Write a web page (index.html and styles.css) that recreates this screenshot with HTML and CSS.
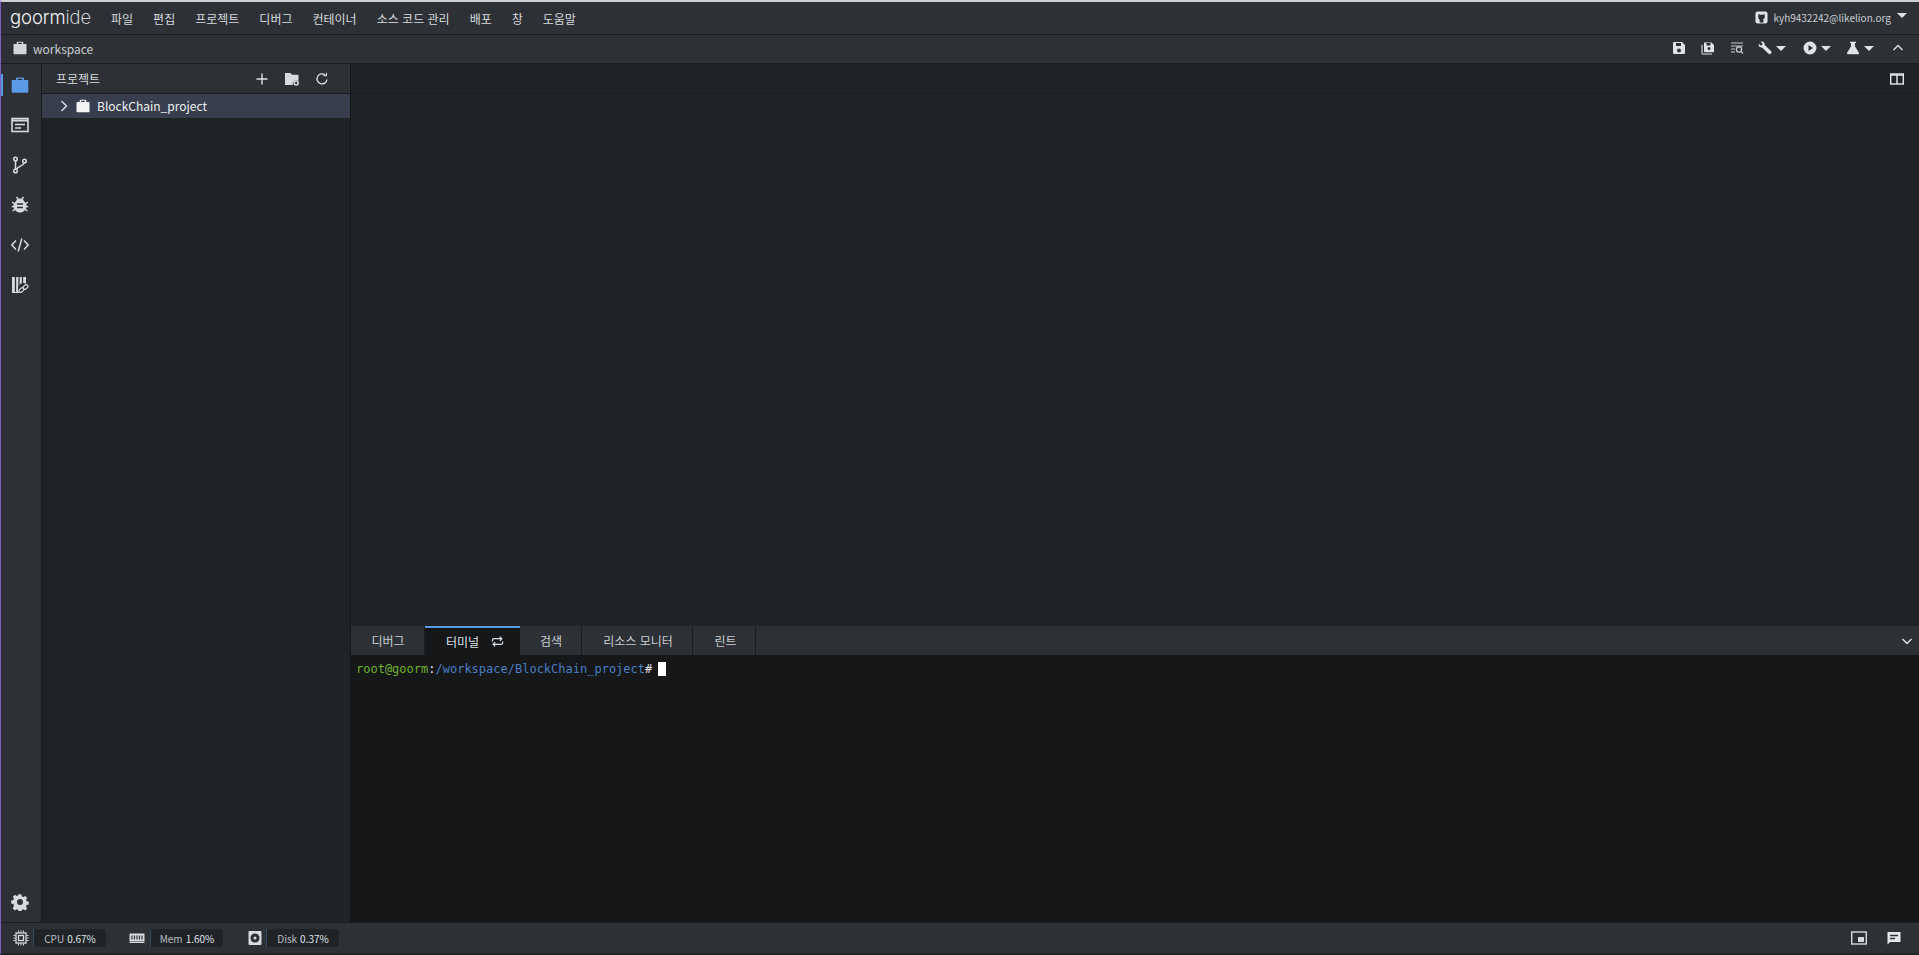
FILE: index.html
```html
<!DOCTYPE html>
<html lang="ko">
<head>
<meta charset="utf-8">
<title>goormIDE</title>
<link rel="stylesheet" href="styles.css">
</head>
<body>
<div class="app">
  <header class="menubar">
    <span class="logo">goorm<i>ide</i></span>
    <nav class="menu">
      <span>파일</span><span>편집</span><span>프로젝트</span><span>디버그</span><span>컨테이너</span><span>소스 코드 관리</span><span>배포</span><span>창</span><span>도움말</span>
    </nav>
    <div class="user">
      <svg class="ic13" viewBox="0 0 14 14"><rect x=".5" y=".5" width="13" height="13" rx="2.500" fill="#dfe3e8"/><path d="M3.500 5.500 3.800 3.200l1.900.9h2.600l1.900-.9.300 2.300c.5 2-.5 3.200-1.900 3.400.4.400.5.800.5 1.300V12.500H5V10c-.1-1-1.800-1-1.500-4.500Z" fill="#2d3135"/></svg>
      <span class="user-mail">kyh9432242@likelion.org</span>
      <span class="caret user-caret"></span>
    </div>
  </header>

  <div class="toolbar">
    <svg class="ic14" viewBox="0 0 14 14"><path d="M4.500 .8h5a.8.800 0 0 1 .8.800V3h2.400a.8.800 0 0 1 .8.800v8.600a.8.800 0 0 1-.8.800H1.300a.8.800 0 0 1-.8-.8V3.800A.8.800 0 0 1 1.300 3h2.400V1.600a.8.800 0 0 1 .8-.8Zm.7 1V3h3.600V1.800Z" fill="#d3d6da" fill-rule="evenodd"/></svg>
    <span class="ws-name">workspace</span>
    <div class="tools">
      <svg class="ic14" viewBox="0 0 14 14"><path d="M1 2a1 1 0 0 1 1-1h8l3 3v8a1 1 0 0 1-1 1H2a1 1 0 0 1-1-1Zm3 0v3h5V2Zm3 5.500a2 2 0 1 0 0 4 2 2 0 0 0 0-4Z" fill="#dfe3e8" fill-rule="evenodd"/></svg>
      <svg class="ic14" viewBox="0 0 14 14"><path d="M3 1.500h7.500L13 4v6.500a.8.800 0 0 1-.8.800H3.800a.8.800 0 0 1-.8-.8Zm2.500.500v2.500h4V2Zm2.500 4a1.500 1.500 0 1 0 0 3 1.500 1.500 0 0 0 0-3Z" fill="#dfe3e8" fill-rule="evenodd"/><path d="M1 4v8.200a.8.800 0 0 0 .8.800H11" fill="none" stroke="#dfe3e8" stroke-width="1.100"/></svg>
      <svg class="ic14" viewBox="0 0 14 14" fill="none" stroke="#c9cdd2"><path d="M1 2h12M1 5h12M1 8h4M1 11h4"/><circle cx="9" cy="8.500" r="2.600" stroke-width="1.300"/><path d="m11 10.500 2 2" stroke-width="1.300"/></svg>
      <span class="tool-drop tool-wrench">
        <svg class="ic14" viewBox="0 0 14 14"><path d="M.8 2.800 3 4.800 4.700 3 2.700.8C5 0 7 1.500 6.700 4L13 10c.8.800.6 1.900-.1 2.600-.7.700-1.800.8-2.600 0L4.300 6.700C2.300 7.100 0 5.200.8 2.800Z" fill="#dfe3e8"/></svg>
        <span class="caret"></span>
      </span>
      <span class="tool-drop tool-play">
        <svg class="ic14" viewBox="0 0 14 14"><path d="M7 .5a6.500 6.500 0 1 0 0 13 6.500 6.500 0 0 0 0-13ZM5.500 4l4.500 3-4.500 3Z" fill="#dfe3e8" fill-rule="evenodd"/></svg>
        <span class="caret"></span>
      </span>
      <span class="tool-drop tool-flask">
        <svg class="ic14" viewBox="0 0 14 14"><path d="M4 .8h6v1.200H9v3.300l3.900 6.500c.4.700 0 1.400-.8 1.400H1.900c-.8 0-1.200-.7-.8-1.400L5 5.300V2H4Z" fill="#dfe3e8"/></svg>
        <span class="caret"></span>
      </span>
      <svg class="ic14 tool-up" viewBox="0 0 14 14" fill="none" stroke="#dfe3e8" stroke-width="1.400"><path d="m2.500 9 4.500-4.500L11.500 9"/></svg>
    </div>
  </div>

  <div class="main">
    <aside class="rail">
      <div class="rail-item rail-active">
        <svg class="ic18" viewBox="0 0 18 18"><path d="M6 1.500h6a1 1 0 0 1 1 1V4h3.500a.8.800 0 0 1 .8.800V16a.8.800 0 0 1-.8.800h-15A.8.800 0 0 1 .7 16V4.800A.8.800 0 0 1 1.500 4H5V2.500a1 1 0 0 1 1-1Zm.7 1.200V4h4.600V2.700Z" fill="#5b9be6" fill-rule="evenodd"/></svg>
      </div>
      <div class="rail-item">
        <svg class="ic18" viewBox="0 0 18 18" fill="none" stroke="#d7dade" stroke-width="1.600"><rect x="1" y="2.500" width="16" height="13"/><path d="M1 4.500h16" stroke-width="2"/><path d="M4 8.500h10M4 12h6"/></svg>
      </div>
      <div class="rail-item">
        <svg class="ic18" viewBox="0 0 18 18" fill="none" stroke="#d7dade" stroke-width="1.500"><circle cx="4.500" cy="3" r="1.800"/><circle cx="4.500" cy="15" r="1.800"/><circle cx="13.500" cy="5" r="1.800"/><path d="M4.500 4.800v8.400M13.200 6.800C12.500 10 6.500 10.500 5.300 13.300"/></svg>
      </div>
      <div class="rail-item">
        <svg class="ic18" viewBox="0 0 18 18"><path d="M5 5.500C5 3.500 7 2.500 9 2.500s4 1 4 3C14.800 6.500 15.500 8 15.500 10c0 4-3.500 6.500-6.500 6.500S2.500 14 2.500 10c0-2 .7-3.500 2.500-4.500Z" fill="#d7dade"/><path d="M1 6l3 2M17 6l-3 2M.8 10.500h3M17.200 10.500h-3M1.500 15l3-2M16.500 15l-3-2M5.500 1l1.500 2M12.500 1 11 3" stroke="#d7dade" stroke-width="1.500"/><path d="M6 8h6M6 11.500h6" stroke="#2d3135" stroke-width="1.500"/></svg>
      </div>
      <div class="rail-item">
        <svg class="ic18" viewBox="0 0 18 18" fill="none" stroke="#d7dade" stroke-width="1.500"><path d="M5 4.500.9 9 5 13.500M13 4.500 17.100 9 13 13.500M10.800 2.500 7.200 15.500"/></svg>
      </div>
      <div class="rail-item">
        <svg class="ic18" viewBox="0 0 18 18"><path d="M1 1h14v16H1Z" fill="#d7dade"/><path d="M4.500 1v15M8 1v15M11.500 1v8" stroke="#2d3135" stroke-width="1.300"/><circle cx="12.500" cy="12.500" r="5.500" fill="#2d3135"/><g fill="none" stroke="#d7dade" stroke-width="1.200"><rect x="7.800" y="12.300" width="5.400" height="3.400" rx="1.700" transform="rotate(-40 10.500 14)"/><rect x="11.800" y="9.300" width="5.400" height="3.400" rx="1.700" transform="rotate(-40 14.500 11)"/></g></svg>
      </div>
      <div class="rail-item rail-bottom">
        <svg class="ic18" viewBox="0 0 18 18"><path d="M7.600 1h2.800l.4 2.200 1.500.7 1.900-1.200 2 2-1.200 1.900.6 1.500 2.200.5v2.800l-2.200.5-.6 1.500 1.200 1.900-2 2-1.900-1.200-1.500.6-.4 2.300H7.600l-.4-2.300-1.500-.6-1.900 1.200-2-2L3 12.200l-.6-1.500L.2 10.200V7.400l2.200-.5.600-1.500L1.800 3.500l2-2L5.700 2.700l1.500-.6Z" fill="#d7dade" transform="translate(0 .2)"/><circle cx="9" cy="9" r="3" fill="#2d3135"/></svg>
      </div>
    </aside>

    <section class="project">
      <div class="project-head">
        <span class="project-title">프로젝트</span>
        <svg class="ic14" viewBox="0 0 14 14" stroke="#dfe3e8" stroke-width="1.400"><path d="M7 1.500v11M1.500 7h11"/></svg>
        <svg class="ic14" viewBox="0 0 14 14"><path d="M0 1h5.500L7 2.800h6.500v6A3.800 3.800 0 0 0 7.800 13H0Z" fill="#d7dade"/><circle cx="11.200" cy="11" r="2" fill="none" stroke="#d7dade" stroke-width="1.600"/></svg>
        <svg class="ic14" viewBox="0 0 14 14" fill="none" stroke="#dfe3e8" stroke-width="1.300"><path d="M12 7.500A5 5 0 1 1 10.200 3"/><path d="M8.200 3.700h3.300V.7" stroke-width="1.100"/></svg>
      </div>
      <div class="tree-row">
        <svg class="tree-chevron" viewBox="0 0 8 12" fill="none" stroke="#dfe3e8" stroke-width="1.300"><path d="m1.500 1 5 5-5 5"/></svg>
        <svg class="ic14" viewBox="0 0 14 14"><path d="M4.500 .8h5a.8.800 0 0 1 .8.800V3h2.400a.8.800 0 0 1 .8.800v8.600a.8.800 0 0 1-.8.800H1.300a.8.800 0 0 1-.8-.8V3.800A.8.800 0 0 1 1.300 3h2.400V1.600a.8.800 0 0 1 .8-.8Zm.7 1V3h3.600V1.800Z" fill="#f2f4f6" fill-rule="evenodd"/></svg>
        <span class="tree-name">BlockChain_project</span>
      </div>
    </section>

    <section class="work">
      <div class="editor-head">
        <svg class="ic14" viewBox="0 0 14 14" fill="none" stroke="#e4e7ea" stroke-width="1.400"><rect x=".7" y="2" width="12.600" height="10"/><path d="M7 2v10M.7 3h12.600"/></svg>
      </div>
      <div class="editor"></div>
      <div class="tabs">
        <span class="tab tab-debug">디버그</span>
        <span class="tab tab-on">터미널
          <svg class="ic13" viewBox="0 0 14 14" fill="none" stroke="#dfe3e8" stroke-width="1.300"><path d="M1.500 7V5.500a1.500 1.500 0 0 1 1.500-1.500h8.500M9.500 1.800l2.200 2.200-2.200 2.200M12.500 7v1.500a1.500 1.500 0 0 1-1.500 1.500H2.500M4.500 7.800 2.300 10l2.200 2.200"/></svg>
        </span>
        <span class="tab tab-search">검색</span>
        <span class="tab tab-res">리소스 모니터</span>
        <span class="tab tab-lint">린트</span>
        <span class="tabs-fill">
          <svg class="ic12" viewBox="0 0 12 12" fill="none" stroke="#dfe3e8" stroke-width="1.400"><path d="m1.500 4 4.500 4.500L10.500 4"/></svg>
        </span>
      </div>
      <div class="terminal"><span class="t-green">root@goorm</span><span class="t-white">:</span><span class="t-blue">/workspace/BlockChain_project</span><span class="t-white"># </span><span class="t-cursor"></span></div>
    </section>
  </div>

  <footer class="status">
    <svg class="ic16" viewBox="0 0 16 16" fill="none" stroke="#d7dade"><rect x="3" y="3" width="10" height="10" stroke-width="1.300"/><rect x="5.500" y="5.500" width="5" height="5" stroke-width="1.300"/><path d="M5.500 .5v2M8 .5v2M10.500 .5v2M5.500 13.500v2M8 13.500v2M10.500 13.500v2M.5 5.500h2M.5 8h2M.5 10.500h2M13.500 5.500h2M13.500 8h2M13.500 10.500h2"/></svg>
    <span class="meter m-cpu">CPU <b>0.67%</b></span>
    <svg class="ic16 st-mem" viewBox="0 0 16 16"><path d="M.5 3.500h15v8h-15Z" fill="#d7dade"/><path d="M3 5.500v4M5.500 5.500v4M8 5.500v4M10.500 5.500v4M13 5.500v4" stroke="#2d3135" stroke-width="1.200"/><path d="M.5 12.500h15" stroke="#d7dade"/></svg>
    <span class="meter m-mem">Mem <b>1.60%</b></span>
    <svg class="ic16 st-disk" viewBox="0 0 16 16"><rect x="1.500" y="1" width="13" height="14" rx="1" fill="#d7dade"/><circle cx="8" cy="8" r="4.500" fill="#2d3135"/><circle cx="8" cy="8" r="1.500" fill="#d7dade"/></svg>
    <span class="meter m-disk">Disk <b>0.37%</b></span>
    <div class="status-right">
      <svg class="ic16" viewBox="0 0 16 16" fill="none"><rect x=".7" y="2" width="14.600" height="12" stroke="#d7dade" stroke-width="1.400"/><rect x="7" y="7" width="6" height="5" fill="#d7dade"/></svg>
      <svg class="ic16" viewBox="0 0 16 16"><path d="M1.500 2h13v10H4l-2.500 2.500Z" fill="#e4e7ea"/><path d="M4 5.500h8M4 8.500h5" stroke="#2d3135" stroke-width="1.300"/></svg>
    </div>
  </footer>
</div>
</body>
</html>
```
FILE: styles.css
```css
* { box-sizing: border-box; }
html, body { margin: 0; height: 100%; overflow: hidden; background: #2d3135; }
body { font-family: "Noto Sans CJK KR", "Noto Sans", sans-serif; font-size: 12px; color: #d7dade; }
svg { display: block; flex: none; }
.ic12 { width: 12px; height: 12px; }
.ic13 { width: 13px; height: 13px; }
.ic14 { width: 14px; height: 14px; }
.ic16 { width: 16px; height: 16px; }
.ic18 { width: 18px; height: 18px; }

.app {
  height: 955px; display: flex; flex-direction: column;
  border-top: 2px solid #cfd2d5; border-left: 1px solid #7b5bc4; border-bottom: 2px solid #202326;
}

.menubar {
  height: 33px; flex: none; display: flex; align-items: center;
  padding: 0 12px 0 9px; background: #2d3135; border-bottom: 1px solid #1a1d1f;
}
.logo { font-family: "Inter", sans-serif; font-size: 18.500px; font-weight: 300; color: #f2f4f6; width: 82px; line-height: 1; margin-top: -1px; letter-spacing: -.1px; white-space: nowrap; }
.logo i { font-style: normal; font-weight: 200; }
.menu { display: flex; margin-left: 19px; gap: 20px; color: #d7dade; }
.user { margin-left: auto; display: flex; align-items: center; gap: 5px; margin-top: -2px; }
.user-mail { font-size: 10px; color: #c9cdd2; }
.caret { display: block; width: 0; height: 0; border-left: 5px solid transparent; border-right: 5px solid transparent; border-top: 5px solid #dfe3e8; flex: none; }
.user-caret { margin: -4px 0 0 1px; }

.toolbar {
  height: 29px; flex: none; display: flex; align-items: center; padding: 0 14px 2px 12px;
  background: #2d3135; border-bottom: 1px solid #1a1d1f;
}
.ws-name { margin-left: 6px; font-size: 12px; color: #c9cdd2; }
.tools { margin-left: auto; display: flex; align-items: center; gap: 15px; }
.tool-drop { display: flex; align-items: center; gap: 4px; }
.tool-wrench { margin-left: -1px; }
.tool-play { margin-left: 2px; }
.tool-flask { margin-left: 0; }
.tool-up { margin-left: 2px; }

.main { flex: 1; display: flex; min-height: 0; }

.rail { width: 41px; flex: none; display: flex; flex-direction: column; padding: 1px 2px 0 0; background: #2d3135; border-right: 1px solid #1a1d1f; }
.rail-item { height: 40px; flex: none; display: flex; align-items: center; justify-content: center; position: relative; }
.rail-active::before { content: ""; position: absolute; left: 0; top: 9px; width: 2px; height: 22px; background: #5b9be6; }
.rail-bottom { margin-top: auto; }

.project { width: 309px; flex: none; background: #202326; border-right: 1px solid #15171a; }
.project-head { height: 30px; display: flex; align-items: center; gap: 16px; padding: 0 21px 0 14px; background: #2d3135; border-bottom: 1px solid #1a1d1f; }
.project-title { margin-right: auto; }
.tree-row { height: 24px; display: flex; align-items: center; padding-left: 18px; background: #383e4d; color: #eef0f2; }
.tree-chevron { width: 8px; height: 12px; margin-right: 8px; }
.tree-name { margin: -2px 0 0 7px; font-size: 12px; }

.work { flex: 1; min-width: 0; display: flex; flex-direction: column; background: #212427; }
.editor-head { height: 30px; flex: none; display: flex; align-items: center; justify-content: flex-end; padding-right: 15px; border-bottom: 1px solid #1a1d1f; }
.editor { flex: 1; }
.tabs { height: 29px; flex: none; display: flex; background: #2d3135; }
.tab { display: flex; align-items: center; justify-content: center; border-right: 1px solid #1a1d1f; color: #c9cdd2; }
.tab-debug { width: 74px; padding-left: 1px; }
.tab-on { width: 95px; justify-content: flex-start; padding-left: 21px; background: #151719; border-top: 2px solid #5b9be6; gap: 12px; border-right: 0; color: #dfe3e8; }
.tab-search { width: 62px; padding-left: 1px; }
.tab-res { width: 111px; padding-left: 2px; }
.tab-lint { width: 63px; padding-left: 3px; }
.tabs-fill { flex: 1; display: flex; align-items: center; justify-content: flex-end; padding-right: 6px; }
.terminal { height: 267px; flex: none; background: #151719; padding: 6px 5px; font-family: "DejaVu Sans Mono", monospace; font-size: 12px; line-height: 16px; white-space: pre; display: flex; align-items: flex-start; }
.t-green { color: #6fb02c; }
.t-blue { color: #4a7fc4; }
.t-white { color: #e4e7ea; }
.t-cursor { display: block; width: 8px; height: 14px; margin: 1px 0 0 -1px; background: #fff; }

.status { height: 31px; flex: none; display: flex; align-items: center; padding: 0 17px 0 12px; background: #2d3135; border-top: 1px solid #1a1d1f; }
.meter { width: 73px; height: 18px; display: flex; align-items: center; justify-content: center; gap: 3px; background: #212427; border-left: 1px solid #2f4a6b; border-radius: 0 3px 3px 0; font-size: 10px; color: #b7bcc2; }
.meter b { font-weight: 400; color: #dfe3e8; }
.m-cpu { margin-left: 4px; }
.m-mem { margin-left: 5px; }
.m-disk { margin-left: 3px; }
.st-mem { margin-left: 23px; }
.st-disk { margin-left: 24px; }
.status-right { margin-left: auto; display: flex; align-items: center; gap: 19px; }
```
